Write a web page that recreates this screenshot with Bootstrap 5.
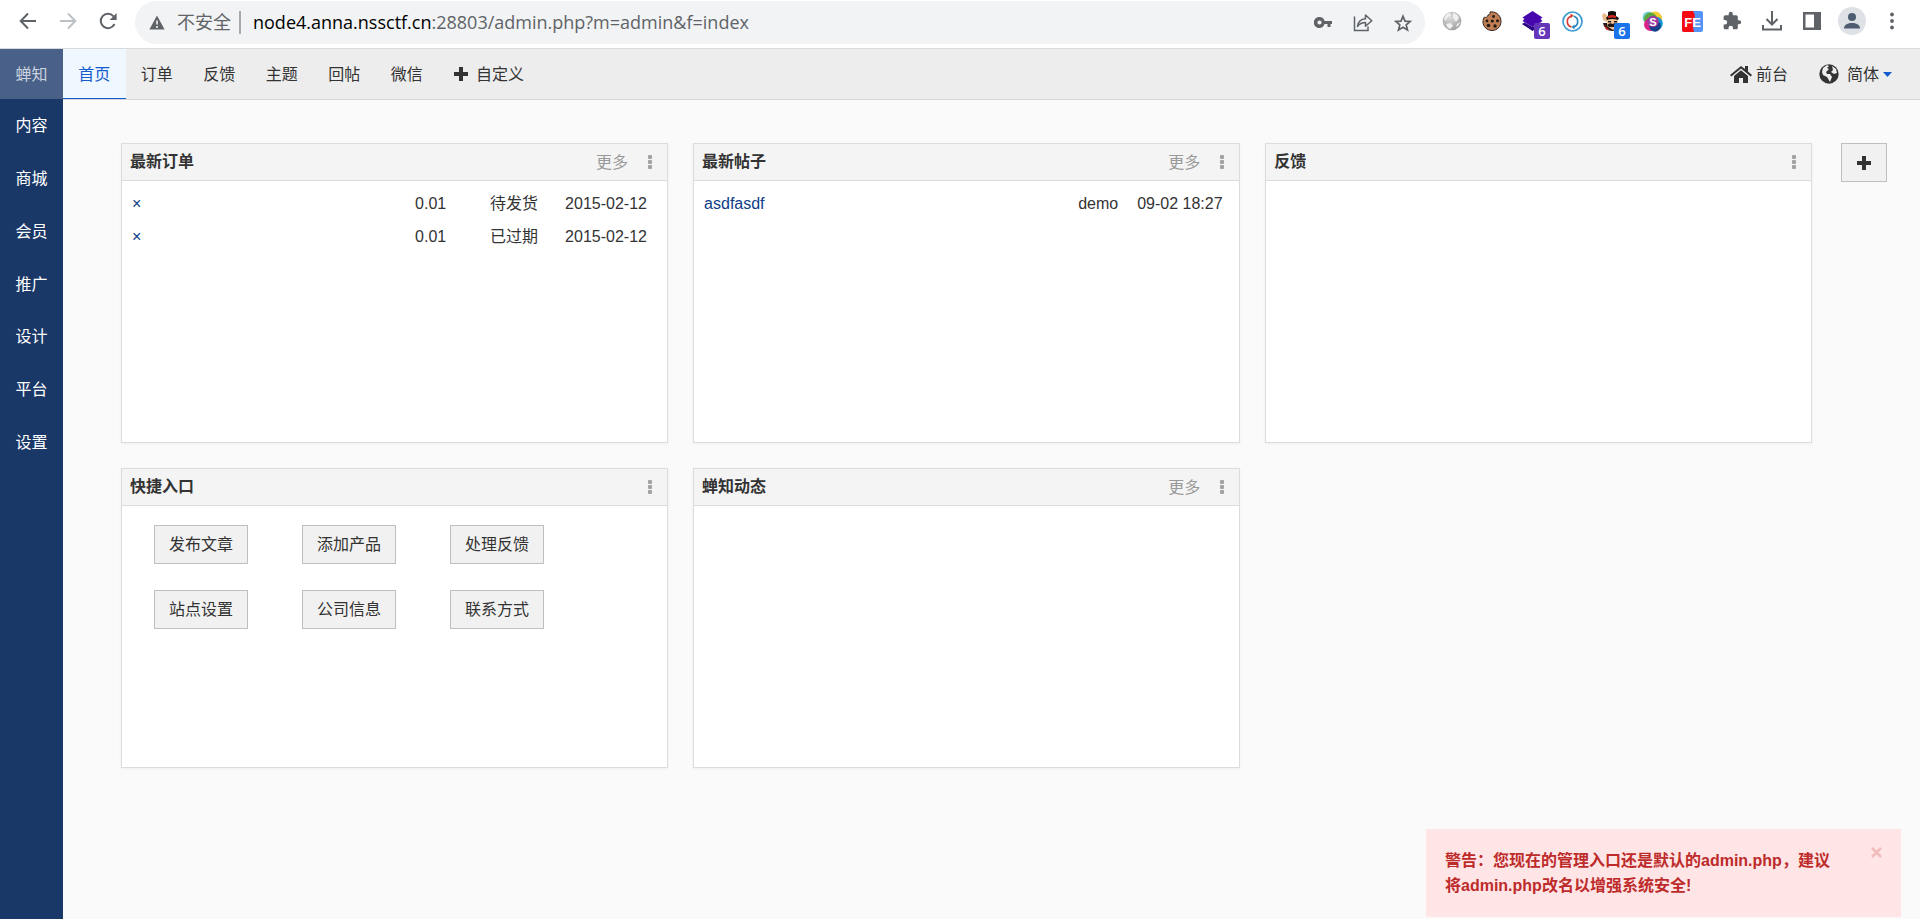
<!DOCTYPE html>
<html lang="zh-CN">
<head>
<meta charset="utf-8">
<meta name="viewport" content="width=device-width, initial-scale=1">
<title>蝉知</title>
<link rel="stylesheet" href="https://cdn.jsdelivr.net/npm/bootstrap@5.3.0/dist/css/bootstrap.min.css">
<style>
:root{--navy:#1a3867;--line:#dcdcdc;--ink:#333}
body{font-family:"Liberation Sans","Noto Sans CJK SC",sans-serif;font-size:16px;line-height:25px;color:var(--ink);background:#fafafa}
a{text-decoration:none}
button{color:inherit}
svg{display:block;flex:none}
/* browser bar */
.browser-bar{height:49px;background:#fff;border-bottom:1px solid #d9dadb;padding:1px 8px 4px;color:#5f6368}
.tool-btn{width:40px;height:40px;padding:0;border:0;background:none;display:flex;align-items:center;justify-content:center;position:relative;flex:none}
.omnibox{height:43px;border-radius:22px;background:#f1f3f4;font-family:"Open Sans","Noto Sans CJK SC",sans-serif;font-size:18px;margin:0 7px;padding:0 2px 0 14px}
.omnibox .vr{opacity:.5;width:2px;margin:10px 12px 10px 8px}
.address{white-space:nowrap}
.count-tag{position:absolute;left:22px;top:22px;width:16px;height:16px;border-radius:2px;color:#fff;font:600 13px/16px "Open Sans",sans-serif;text-align:center}
.count-tag.violet{background:#6535ba}
.count-tag.azure{background:#1a73e8}
/* side column */
.side-col{width:63px;background:var(--navy);flex:none}
.side-col a{color:#fff}
.side-brand{height:50px;background:#496188}
.side-brand.side-brand{color:#c9d2de}
.side-menu{height:370px}
/* header */
.top-strip{height:51px;background:#ededed;border-bottom:1px solid #d5d5d5;padding-right:28px}
.top-strip a{color:var(--ink)}
.main-tabs{width:375px}
.main-tabs .nav-link{padding:0;height:50px;line-height:51px}
.main-tabs .nav-link.active{background:#eff7ff;color:#145ccd;border-bottom:1px solid #145ccd}
.site-link{margin-right:31px}
/* blocks */
.board{padding:43px 33px 0 58px;gap:29px}
.board-grid{display:grid;grid-template-columns:repeat(3,1fr);gap:25px}
.block-card{height:300px;background:#fff;border:1px solid var(--line);box-shadow:0 1px 3px rgba(0,0,0,.05)}
.block-head{height:37px;background:#f4f4f4;border-bottom:1px solid var(--line);padding:0 8px}
.block-head h2{font-size:16px;line-height:24px;font-weight:700;margin:0}
.block-head a{color:#999;margin-right:13px}
.more-btn{border:0;background:none;padding:0;width:18px;height:24px;color:#a3a3a3;display:flex;align-items:center;justify-content:center}
.block-body{padding:6px 10px}
.block-body table{width:100%;table-layout:fixed}
.block-body td{height:33px;padding:0;white-space:nowrap}
.block-body td a{color:#0d3d88}
.c-price{width:75px}.c-state{width:75px}.c-date{width:92px}
.c-user{width:59px}.c-time{width:92px}
.flat-btn{border:1px solid #bfbfbf;border-radius:0;background:#f1f1f1;height:39px;padding:0;color:var(--ink);font-size:16px;line-height:24px}
.flat-btn:hover{background:#e5e5e5}
.entry-grid{display:grid;grid-template-columns:repeat(3,94px);gap:26px 54px;padding:19px 32px}
.add-btn{width:46px;flex:none}
/* notice */
.notice{position:fixed;right:19px;bottom:2px;width:475px;height:88px;background:#ffe5e5;color:#bd2b2b;font-weight:700;padding:19px 64px 19px 19px}
.notice button{position:absolute;right:14px;top:13px;border:0;background:none;padding:5px;color:#f0bcbc}
</style>
</head>
<body class="min-vh-100 d-flex flex-column">
<div class="browser-bar d-flex">
  <button class="tool-btn" aria-label="后退"><svg width="18" height="18" viewBox="0 0 18 18" fill="none" stroke="currentColor" stroke-width="2"><path d="M17 9H2M9 1.500L1.700 9L9 16.500"/></svg></button>
  <button class="tool-btn" aria-label="前进"><svg width="18" height="18" viewBox="0 0 18 18" fill="none" stroke="#bdc1c6" stroke-width="2"><path d="M1 9h15M9 1.500L16.300 9L9 16.500"/></svg></button>
  <button class="tool-btn" aria-label="刷新"><svg width="18" height="18" viewBox="0 0 18 18"><path d="M15.500 12A7.200 7.200 0 1 1 14.500 4.300" fill="none" stroke="currentColor" stroke-width="2"/><path d="M17.600 1v7h-7z" fill="currentColor"/></svg></button>
  <div class="omnibox d-flex align-items-center flex-grow-1">
    <svg width="16" height="15" viewBox="0 0 16 15"><path d="M8 .5L15.600 14.500H.4z" fill="currentColor"/><path d="M8 5.500v4M8 11v2" stroke="#f1f3f4" stroke-width="1.600"/></svg>
    <span class="ms-2 ps-1">不安全</span>
    <span class="vr"></span>
    <span class="address flex-grow-1"><span class="text-black">node4.anna.nssctf.cn</span>:28803/admin.php?m=admin&amp;f=index</span>
    <button class="tool-btn" aria-label="密码"><svg width="18" height="11" viewBox="0 0 18 11" fill="currentColor"><path fill-rule="evenodd" d="M5.500 0a5.500 5.500 0 0 1 5.100 4H18v3h-1.500v3h-3V7h-2.900A5.500 5.500 0 1 1 5.500 0zm0 3.400a2.100 2.100 0 1 0 0 4.200 2.100 2.100 0 0 0 0-4.200z"/></svg></button>
    <button class="tool-btn" aria-label="分享"><svg width="20" height="19" viewBox="0 0 20 19" fill="none" stroke="currentColor" stroke-width="1.500"><path d="M1.500 3.500v14H15V13.500"/><path d="M4.500 13.500c.5-5 3.500-7.500 8-7.800V2l6.300 5.700-6.300 5.500V9.500c-3.500 0-6 1-8 4z" stroke-linejoin="round"/></svg></button>
    <button class="tool-btn" aria-label="收藏"><svg width="18" height="18" viewBox="0 0 18 18" fill="none" stroke="currentColor" stroke-width="1.700"><path d="M9 2.200l2 4.900 5.200.4-4 3.400 1.300 5.100L9 13.200l-4.500 2.800 1.300-5.100-4-3.400L7 7.100z"/></svg></button>
  </div>
  <button class="tool-btn" aria-label="代理"><svg width="20" height="20" viewBox="0 0 20 20"><defs><radialGradient id="orb" cx=".4" cy=".3" r=".8"><stop offset="0" stop-color="#ddd"/><stop offset="1" stop-color="#999"/></radialGradient></defs><circle cx="10" cy="10" r="9.300" fill="url(#orb)"/><path d="M2 8q2-6 6-6l1 3q-4 0-5 5zM11 2q5 1 6 5l-3 4-3-4zM4 13l5-1 2 3-3 3q-3-1-4-5zM15 13l3-2q-1 4-4 5z" fill="#f0f0f0"/></svg></button>
  <button class="tool-btn" aria-label="Cookie"><svg width="20" height="20" viewBox="0 0 20 20"><path d="M8 1c4-1 11 2 11 9.500 0 5-4 9-9 9s-9-4-9-8.500c0-2 .5-4 1.500-5C4 7 6 6 6 4c1.500 0 2.500-1 2-3z" fill="#c27f53" stroke="#2d2522"/><g fill="#211a18"><circle cx="11.500" cy="5.500" r="1.400"/><circle cx="15.500" cy="9.700" r="1.500"/><circle cx="6.500" cy="14.500" r="1.800"/><circle cx="10.300" cy="10" r="1.600"/><circle cx="13" cy="15" r="1.700"/><circle cx="5" cy="10" r="1.400"/></g></svg></button>
  <button class="tool-btn" aria-label="Wappalyzer"><svg width="21" height="21" viewBox="0 0 21 21"><path d="M0 13l2.500-1.500L10.500 16l8-4.500L21 13l-10.500 7z" fill="#2b0780"/><path d="M10.500 0L20.500 6.500l-2 1.500 2 2-10 6-10-6 2-2-2-1.500z" fill="#4608ad"/></svg><span class="count-tag violet">6</span></button>
  <button class="tool-btn" aria-label="同步"><svg width="21" height="21" viewBox="0 0 21 21" fill="none"><circle cx="10.500" cy="10.500" r="9.500" stroke="#3a9bd0" stroke-width="1.700"/><path d="M11.500 5a5.700 5.700 0 0 1 0 11" stroke="#2b87bd" stroke-width="1.700"/><path d="M9.500 16a5.700 5.700 0 0 1 0-11" stroke="#d93c35" stroke-width="1.700"/><path d="M8.500 2.500l3 2-3 3z" fill="#d93c35"/><path d="M12.500 13.500v5l-3-2.500z" fill="#2b87bd"/></svg></button>
  <button class="tool-btn" aria-label="助手"><svg width="20" height="20" viewBox="0 0 20 20"><path d="M1 12h18q-1 8-9 8-8-1-9-8z" fill="#291918"/><path d="M1 9L0 4l2-2 4 3-1 6z" fill="#e9bd8b"/><path d="M5 8h11v7l-5 4-6-4z" fill="#efc399"/><path d="M6 1q4-2 8 0v4l3 2-1 2q-6-2-11 0L4 7l2-2z" fill="#15100f"/><path d="M6 5q4-2 8 0v2q-4-1-8 0z" fill="#d12522"/><path d="M6 10h3v1.500H6zM12 10h3v1.500h-3zM5 14q3-3 5.500-1 3-2 5.500 1l-2 2H7z" fill="#241713"/><path d="M2 14l6 5.500-4-1z" fill="#d12522"/></svg><span class="count-tag azure">6</span></button>
  <button class="tool-btn" aria-label="S"><svg width="21" height="21" viewBox="0 0 21 21"><circle cx="6.500" cy="6.500" r="6" fill="#78d1d2"/><circle cx="13" cy="7.500" r="7" fill="#f5cb32"/><circle cx="8.500" cy="8" r="6.500" fill="#59a842"/><circle cx="14" cy="12.500" r="6.800" fill="#1595d1"/><circle cx="8.500" cy="13.500" r="6.500" fill="#dd2387"/><circle cx="13" cy="15" r="5.800" fill="#17408b"/><circle cx="11" cy="10.500" r="5.800" fill="#9c3aa0"/><text x="11" y="14.500" text-anchor="middle" font-family="Liberation Sans" font-weight="700" font-size="11" fill="#fff">S</text></svg></button>
  <button class="tool-btn" aria-label="FE"><svg width="21" height="21" viewBox="0 0 21 21"><rect width="21" height="21" rx="2" fill="#5494f8"/><path d="M2 0h9q3 5 1 10t0 11H2a2 2 0 0 1-2-2V2a2 2 0 0 1 2-2z" fill="#f50a10"/><text x="10.500" y="15.500" text-anchor="middle" font-family="Liberation Sans" font-weight="700" font-size="13" fill="#fff">FE</text></svg></button>
  <button class="tool-btn" aria-label="扩展程序"><svg width="20" height="20" viewBox="0 0 24 24" fill="currentColor"><path d="M20.500 11H19V7c0-1.100-.9-2-2-2h-4V3.500a2.500 2.500 0 0 0-5 0V5H4c-1.100 0-2 .9-2 2v3.800h1.500a2.700 2.700 0 0 1 0 5.400H2V20c0 1.100.9 2 2 2h3.800v-1.500a2.700 2.700 0 0 1 5.400 0V22H17c1.100 0 2-.9 2-2v-4h1.500a2.500 2.500 0 0 0 0-5z"/></svg></button>
  <button class="tool-btn" aria-label="下载"><svg width="20" height="20" viewBox="0 0 20 20" fill="none" stroke="currentColor" stroke-width="2"><path d="M10 0v13M4.500 8l5.500 5.500L15.500 8M1 14v4.500h18V14"/></svg></button>
  <button class="tool-btn" aria-label="侧边栏"><svg width="18" height="18" viewBox="0 0 18 18" fill="currentColor"><path fill-rule="evenodd" d="M0 0h18v18H0zm2.500 2.500v13h8.500v-13z"/></svg></button>
  <button class="tool-btn" aria-label="用户"><svg width="28" height="28" viewBox="0 0 28 28"><circle cx="14" cy="14" r="14" fill="#dee1e6"/><circle cx="14" cy="10" r="4" fill="#4f5d73"/><path d="M6 21.500c0-4 4-5.500 8-5.500s8 1.500 8 5.500z" fill="#4f5d73"/></svg></button>
  <button class="tool-btn" aria-label="菜单"><svg width="4" height="18" viewBox="0 0 4 18" fill="currentColor"><circle cx="2" cy="2.500" r="1.900"/><circle cx="2" cy="9" r="1.900"/><circle cx="2" cy="15.500" r="1.900"/></svg></button>
</div>
<div class="d-flex flex-grow-1">
  <aside class="side-col">
    <a href="#" class="side-brand d-flex align-items-center justify-content-center">蝉知</a>
    <nav class="side-menu d-flex flex-column text-center">
      <a href="#" class="flex-fill d-flex align-items-center justify-content-center">内容</a>
      <a href="#" class="flex-fill d-flex align-items-center justify-content-center">商城</a>
      <a href="#" class="flex-fill d-flex align-items-center justify-content-center">会员</a>
      <a href="#" class="flex-fill d-flex align-items-center justify-content-center">推广</a>
      <a href="#" class="flex-fill d-flex align-items-center justify-content-center">设计</a>
      <a href="#" class="flex-fill d-flex align-items-center justify-content-center">平台</a>
      <a href="#" class="flex-fill d-flex align-items-center justify-content-center">设置</a>
    </nav>
  </aside>
  <div class="flex-grow-1">
    <header class="top-strip d-flex align-items-center">
      <ul class="nav nav-justified flex-nowrap main-tabs align-self-start">
        <li class="nav-item"><a class="nav-link active" href="#">首页</a></li>
        <li class="nav-item"><a class="nav-link" href="#">订单</a></li>
        <li class="nav-item"><a class="nav-link" href="#">反馈</a></li>
        <li class="nav-item"><a class="nav-link" href="#">主题</a></li>
        <li class="nav-item"><a class="nav-link" href="#">回帖</a></li>
        <li class="nav-item"><a class="nav-link" href="#">微信</a></li>
      </ul>
      <a href="#" class="d-flex align-items-center gap-2 ms-3"><svg width="14" height="14" viewBox="0 0 14 14" fill="currentColor"><path d="M5 0h4v5h5v4H9v5H5V9H0V5h5z"/></svg>自定义</a>
      <a href="#" class="site-link d-flex align-items-center ms-auto gap-1"><svg width="22" height="18" viewBox="0 0 22 18" fill="currentColor"><path d="M11 1L0 10l1.300 1.500L11 3.500l9.700 8L22 10l-4-3.500V1h-3v3z"/><path d="M11 5.200l7 5.800v7h-5v-5H9v5H4v-7z"/></svg>前台</a>
      <a href="#" class="d-flex align-items-center"><svg class="me-2" width="20" height="20" viewBox="0 0 20 20"><circle cx="10" cy="10" r="9.700" fill="#333"/><path d="M3 8l1-4 4-3 2 1-2 2 2 1-3 3 1 2h3l2 3-2 5-3-5-4-2zM13 2l4 3 1 4-3 1-3-2 2-2z" fill="#ededed"/></svg>简体<svg class="ms-1" width="9" height="5" viewBox="0 0 9 5"><path d="M0 0h9L4.500 5z" fill="#145ccd"/></svg></a>
    </header>
    <main class="board d-flex align-items-start">
      <div class="board-grid flex-grow-1">
        <section class="block-card">
          <div class="block-head d-flex align-items-center"><h2 class="me-auto">最新订单</h2><a href="#">更多</a><button class="more-btn" aria-label="操作"><svg width="4" height="14" viewBox="0 0 4 14" fill="currentColor"><rect width="4" height="4" rx="1"/><rect y="5" width="4" height="4" rx="1"/><rect y="10" width="4" height="4" rx="1"/></svg></button></div>
          <div class="block-body"><table>
            <colgroup><col><col class="c-price"><col class="c-state"><col class="c-date"></colgroup>
            <tr><td><a href="#">×</a></td><td>0.01</td><td>待发货</td><td>2015-02-12</td></tr>
            <tr><td><a href="#">×</a></td><td>0.01</td><td>已过期</td><td>2015-02-12</td></tr>
          </table></div>
        </section>
        <section class="block-card">
          <div class="block-head d-flex align-items-center"><h2 class="me-auto">最新帖子</h2><a href="#">更多</a><button class="more-btn" aria-label="操作"><svg width="4" height="14" viewBox="0 0 4 14" fill="currentColor"><rect width="4" height="4" rx="1"/><rect y="5" width="4" height="4" rx="1"/><rect y="10" width="4" height="4" rx="1"/></svg></button></div>
          <div class="block-body"><table>
            <colgroup><col><col class="c-user"><col class="c-time"></colgroup>
            <tr><td><a href="#">asdfasdf</a></td><td>demo</td><td>09-02 18:27</td></tr>
          </table></div>
        </section>
        <section class="block-card">
          <div class="block-head d-flex align-items-center"><h2 class="me-auto">反馈</h2><button class="more-btn" aria-label="操作"><svg width="4" height="14" viewBox="0 0 4 14" fill="currentColor"><rect width="4" height="4" rx="1"/><rect y="5" width="4" height="4" rx="1"/><rect y="10" width="4" height="4" rx="1"/></svg></button></div>
        </section>
        <section class="block-card">
          <div class="block-head d-flex align-items-center"><h2 class="me-auto">快捷入口</h2><button class="more-btn" aria-label="操作"><svg width="4" height="14" viewBox="0 0 4 14" fill="currentColor"><rect width="4" height="4" rx="1"/><rect y="5" width="4" height="4" rx="1"/><rect y="10" width="4" height="4" rx="1"/></svg></button></div>
          <div class="entry-grid">
            <button class="btn flat-btn">发布文章</button><button class="btn flat-btn">添加产品</button><button class="btn flat-btn">处理反馈</button>
            <button class="btn flat-btn">站点设置</button><button class="btn flat-btn">公司信息</button><button class="btn flat-btn">联系方式</button>
          </div>
        </section>
        <section class="block-card">
          <div class="block-head d-flex align-items-center"><h2 class="me-auto">蝉知动态</h2><a href="#">更多</a><button class="more-btn" aria-label="操作"><svg width="4" height="14" viewBox="0 0 4 14" fill="currentColor"><rect width="4" height="4" rx="1"/><rect y="5" width="4" height="4" rx="1"/><rect y="10" width="4" height="4" rx="1"/></svg></button></div>
        </section>
      </div>
      <button class="btn flat-btn add-btn d-flex align-items-center justify-content-center" aria-label="添加"><svg width="14" height="14" viewBox="0 0 14 14" fill="currentColor"><path d="M5 0h4v5h5v4H9v5H5V9H0V5h5z"/></svg></button>
    </main>
  </div>
</div>
<div class="notice" role="alert">警告：您现在的管理入口还是默认的admin.php，建议将admin.php改名以增强系统安全!<button aria-label="关闭"><svg width="11" height="11" viewBox="0 0 11 11" stroke="currentColor" stroke-width="2.500"><path d="M1 1l9 9M10 1l-9 9"/></svg></button></div>
<script src="https://cdn.jsdelivr.net/npm/bootstrap@5.3.0/dist/js/bootstrap.bundle.min.js"></script>
</body>
</html>
